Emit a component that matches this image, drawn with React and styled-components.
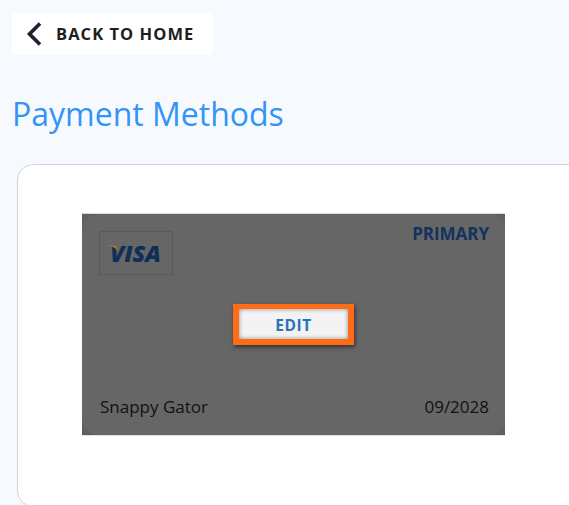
import React from "react";
import styled, { createGlobalStyle } from "styled-components";

const GlobalStyle = createGlobalStyle`
  html, body {
    margin: 0;
    height: 100%;
    overflow: hidden;
    background: #f6faff;
    font-family: "Open Sans", "Noto Sans", sans-serif;
  }
`;

const Page = styled.div`
  width: 569px;
  height: 505px;
  overflow: hidden;
  padding: 13px 0 0 12px;
  box-sizing: border-box;
`;

const BackButton = styled.a`
  display: flex;
  align-items: center;
  width: 201px;
  height: 42px;
  box-sizing: border-box;
  padding-left: 14px;
  gap: 13px;
  background: #fff;
  border-radius: 5px;
  color: #1e1e1e;
  font-size: 16.5px;
  line-height: 20px;
  font-weight: 700;
  letter-spacing: 1.05px;
`;

const BackLabel = styled.span`
  margin-top: -1px;
`;

const Title = styled.h1`
  margin: 37px 0 0 0;
  font-size: 32px;
  line-height: 44px;
  font-weight: 400;
  letter-spacing: 0;
  color: #3394f5;
`;

const Panel = styled.section`
  width: 640px;
  height: 343px;
  margin: 28px 0 0 5px;
  box-sizing: border-box;
  padding: 49px 0 0 64px;
  background: #fff;
  border: 1px solid #d0d5dd;
  border-radius: 16px;
`;

const Card = styled.div`
  position: relative;
  width: 423px;
  height: 221px;
  background: #606060;
  box-shadow: 0 -1px 0 #dcdcdc, 0 1px 0 #d8e2ea;
`;

const CardFace = styled.div`
  display: flex;
  flex-direction: column;
  justify-content: space-between;
  height: 100%;
  box-sizing: border-box;
  padding: 17px 16px 17px 18px;
  background: #666;
  border-radius: 16px;
`;

const Row = styled.div`
  display: flex;
  justify-content: space-between;
  align-items: ${(p) => (p.$end ? "flex-end" : "flex-start")};
`;

const LogoBox = styled.div`
  display: flex;
  align-items: center;
  position: relative;
  width: 74px;
  height: 44px;
  margin-left: -1px;
  box-sizing: border-box;
  border: 1px solid #595959;
  padding-left: 10px;
`;

const VisaText = styled.span`
  font-family: "Open Sans", sans-serif;
  font-size: 23.5px;
  font-style: italic;
  font-weight: 800;
  letter-spacing: -0.2px;
  color: #0e3057;
`;

const Swoosh = styled.svg`
  position: absolute;
  left: 7px;
  top: 13px;
  width: 12px;
  height: 7px;
`;

const Primary = styled.span`
  font-size: 17px;
  line-height: 20px;
  font-weight: 700;
  letter-spacing: -0.05px;
  color: #11335c;
  margin-top: -7px;
`;

const CardText = styled.span`
  font-size: 17px;
  line-height: 23px;
  color: #111;
`;

const EditWrap = styled.div`
  position: absolute;
  left: 151px;
  top: 90px;
  width: 121px;
  height: 41px;
  box-sizing: border-box;
  border: 6px solid #ff6c17;
  border-top-width: 5px;
  box-shadow: 1px 2px 4px rgba(0, 0, 0, 0.55);
`;

const EditButton = styled.button`
  display: block;
  width: 100%;
  height: 100%;
  padding: 2px 0 0;
  border: none;
  background: #f3f3f3;
  box-shadow: inset 0 0 4px rgba(0, 0, 0, 0.45);
  color: #2a72ba;
  font-family: inherit;
  font-size: 15.5px;
  font-weight: 700;
  letter-spacing: 0.5px;
`;

const App = () => {
  return (
    <Page>
      <GlobalStyle />
      <BackButton>
        <svg width="17" height="24" viewBox="0 0 17 24" fill="none">
          <path d="M14 1.5 3.5 12 14 22.5" stroke="#1e2233" strokeWidth="3.6" />
        </svg>
        <BackLabel>BACK TO HOME</BackLabel>
      </BackButton>
      <Title>Payment Methods</Title>
      <Panel>
        <Card>
          <CardFace>
            <Row>
              <LogoBox>
                <VisaText>VISA</VisaText>
                <Swoosh viewBox="0 0 12 7">
                  <path d="M0 0.3C4 0 7.5 0.3 9.5 1L11.5 7C9.5 3.5 5 1.2 0 0.3Z" fill="#a5771d" />
                </Swoosh>
              </LogoBox>
              <Primary>PRIMARY</Primary>
            </Row>
            <Row $end>
              <CardText>Snappy Gator</CardText>
              <CardText>09/2028</CardText>
            </Row>
          </CardFace>
          <EditWrap>
            <EditButton>EDIT</EditButton>
          </EditWrap>
        </Card>
      </Panel>
    </Page>
  );
};

export default App;
